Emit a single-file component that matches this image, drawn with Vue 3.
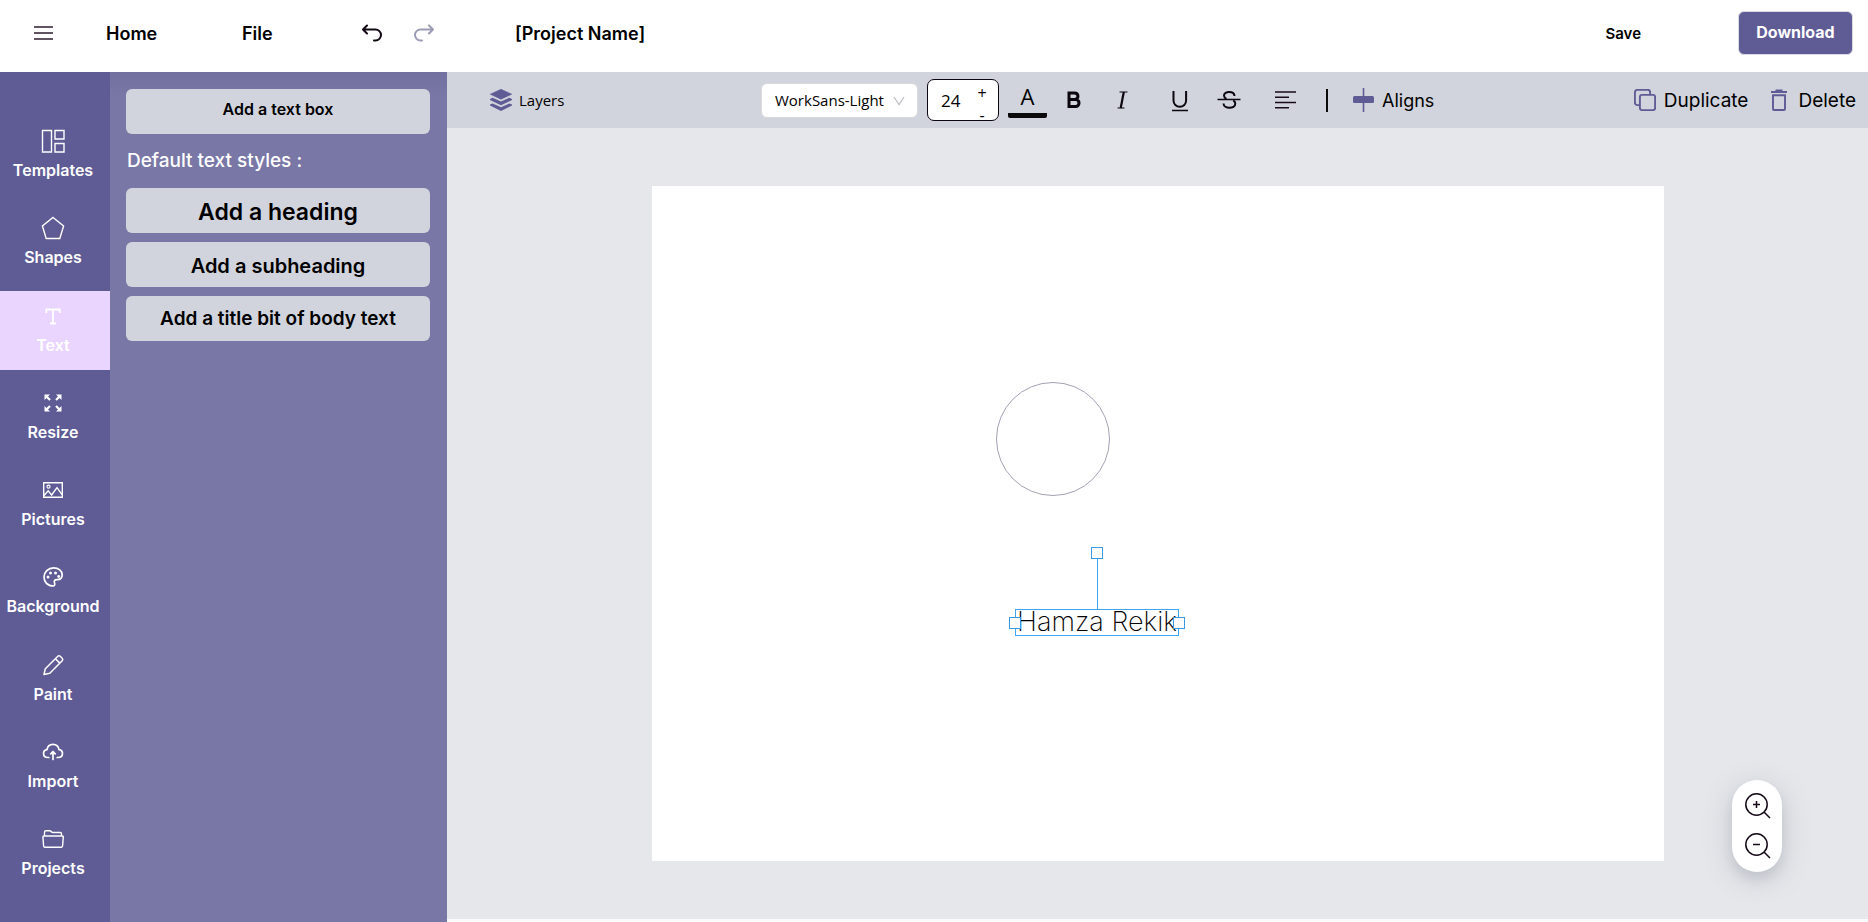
<script setup>
import { ref } from 'vue'

const tools = ['Templates', 'Shapes', 'Text', 'Resize', 'Pictures', 'Background', 'Paint', 'Import', 'Projects']
const active = ref('Text')
const fontFamily = ref('WorkSans-Light')
const fontSize = ref(24)
const projectName = ref('[Project Name]')
</script>

<template>
  <div class="editor">
    <header class="topbar">
      <button class="plain menu" aria-label="Menu">
        <svg width="20" height="14" viewBox="0 0 20 14" fill="none" stroke="#2c1c2e" stroke-width="1.600"><path d="M0 1h19M0 7h19M0 13h19" /></svg>
      </button>
      <nav class="nav">
        <a class="home" href="#home">Home</a>
        <a class="file" href="#file">File</a>
      </nav>
      <div class="history">
        <button class="plain" aria-label="Undo">
          <svg width="20" height="18" viewBox="0 0 20 18" fill="none" stroke="#120814" stroke-width="2" stroke-linecap="round" stroke-linejoin="round"><path d="M5 1.500 1 5.500 5 9.500M1 5.500h12.500a5.300 5.300 0 0 1 0 11h-1.500" /></svg>
        </button>
        <button class="plain" aria-label="Redo">
          <svg width="20" height="18" viewBox="0 0 20 18" fill="none" stroke="#9b9bb6" stroke-width="2" stroke-linecap="round" stroke-linejoin="round"><path d="M15 1.500 19 5.500 15 9.500M19 5.500H6.500a5.300 5.300 0 0 0 0 11h1.500" /></svg>
        </button>
      </div>
      <input v-model="projectName" class="project" aria-label="Project name" />
      <div class="actions">
        <button class="plain save">Save</button>
        <button class="download">Download</button>
      </div>
    </header>

    <div class="body">
      <aside class="sidebar">
        <button v-for="t in tools" :key="t" class="tool" :class="{ active: t === active }" @click="active = t">
          <svg class="tool-icon" width="24" height="24" viewBox="0 0 24 24" fill="none" stroke="#fff" stroke-width="1.400">
            <path v-if="t === 'Templates'" d="M1.500 1.500h9v21.500h-9zM14 1.500h9v8.500h-9zM14 14.500h9V23h-9z" />
            <path v-else-if="t === 'Shapes'" d="M12 1.500 22.600 10 18.800 22.500H5.200L1.400 10z" />
            <path v-else-if="t === 'Text'" d="M5.300 9V5.500h13.400V9M12 5.500v14M9 19.500h6" stroke-width="1.800" />
            <g v-else-if="t === 'Resize'" stroke-width="2.200">
              <path d="M5.500 5.500 9 9M18.500 5.500 15 9M5.500 18.500 9 15M18.500 18.500 15 15" />
              <path d="M3.500 3.500h5.500l-5.500 5.500zM20.500 3.500v5.500l-5.500-5.500zM3.500 20.500v-5.500l5.500 5.500zM20.500 20.500h-5.500l5.500-5.500z" fill="#fff" stroke="none" />
            </g>
            <g v-else-if="t === 'Pictures'" stroke-width="1.400">
              <path d="M2.700 4.700h18.600v14.600H2.700zM3 17.500l4.200-4.700 3.400 4.200 5.400-7.300 5 7" /><circle cx="7.500" cy="8.700" r="1.500" stroke-width="1.200" />
            </g>
            <g v-else-if="t === 'Background'">
              <path d="M12.500 21c-6 0-9.500-4.200-9.500-9s4.200-9.200 9.600-9.200c5 0 8.600 3.200 8.600 7 0 3.600-2.700 4.900-5 4.900-3.200 0-3.200 1.700-2.700 3 .5 1.400.3 3.300-1 3.300z" stroke-width="1.700" />
              <g fill="#fff" stroke="none"><circle cx="7" cy="12" r="1.500" /><circle cx="9.500" cy="8" r="1.500" /><circle cx="14.500" cy="8" r="1.500" /><circle cx="17.700" cy="11.500" r="1.400" /></g>
            </g>
            <path v-else-if="t === 'Paint'" stroke-width="1.500" stroke-linejoin="round" d="M3 21.500l1.300-5.800L16.800 3.300a1.700 1.700 0 0 1 2.400 0l2 2a1.700 1.700 0 0 1 0 2.400L8.800 20.200zM14.400 5.700l4.400 4.400" />
            <g v-else-if="t === 'Import'" stroke-width="1.700" stroke-linecap="round" stroke-linejoin="round">
              <path d="M7.800 17.500H7c-6 0-5.500-7.500-1-7.900C7 2.500 17 2.500 18 9.600c4.600.4 5 7.900-1 7.900h-.8" /><path d="M12 19.500v-7M9.800 13.800 12 11.500l2.200 2.300" />
            </g>
            <g v-else stroke-width="1.400" stroke-linejoin="round">
              <path d="M3.500 9V5.200c0-.8.500-1.400 1.300-1.400h4c1.200 0 1.700 1.700 3 1.700h7.400c.8 0 1.300.6 1.300 1.300V9" /><path d="M2.800 9h18.600c.6 0 1 .4.900 1l-.7 8.800c0 .8-.6 1.400-1.300 1.400H3.900c-.7 0-1.200-.6-1.300-1.400L1.900 10c0-.6.300-1 .9-1z" />
            </g>
          </svg>
          <span>{{ t }}</span>
        </button>
      </aside>

      <section class="panel">
        <button class="style-btn box">Add a text box</button>
        <h2>Default text styles :</h2>
        <div class="styles">
          <button class="style-btn heading">Add a heading</button>
          <button class="style-btn subheading">Add a subheading</button>
          <button class="style-btn bodytext">Add a title bit of body text</button>
        </div>
      </section>

      <main class="stage">
        <div class="toolbar">
          <button class="plain layers">
            <svg width="22" height="22" viewBox="0 0 22 22" fill="#5e5b95"><path d="M11 .3 21.700 5.200 11 10.200.3 5.200z" stroke="#5e5b95" stroke-linejoin="round" stroke-width=".6" /><path d="M2.600 8.700 11 12.600l8.400-3.900L22 10 v1L11 16.300 0 11v-1zM2.600 14.400 11 18.200l8.400-3.800L22 15.600v1L11 22 0 16.600v-1z" /></svg>
            Layers
          </button>
          <div class="format">
            <div class="select">
              <select v-model="fontFamily" aria-label="Font family"><option>WorkSans-Light</option></select>
              <svg width="12" height="10" viewBox="0 0 12 10" fill="none" stroke="#bfbfc4" stroke-width="1.300"><path d="M1 1l5 7.500L11 1" /></svg>
            </div>
            <div class="size">
              <input v-model="fontSize" aria-label="Font size" />
              <div class="steps">
                <button class="plain" aria-label="Increase" @click="fontSize++">+</button>
                <button class="plain minus" aria-label="Decrease" @click="fontSize--">-</button>
              </div>
            </div>
            <button class="plain color" aria-label="Text colour">A</button>
            <button class="plain icon bold" aria-label="Bold">
              <svg width="24" height="24" viewBox="0 0 24 24" fill="none" stroke="#0d060f" stroke-width="3"><path d="M7 5h5.500c4.600 0 4.600 6.500 0 6.500H7zM7 11.500h6.500c4.700 0 4.700 7 0 7H7z" /></svg>
            </button>
            <button class="plain icon italic" aria-label="Italic">
              <svg width="24" height="24" viewBox="0 0 24 24" fill="none" stroke="#0d060f"><path d="M9.500 4h8M7.500 20h7" stroke-width="1.200" /><path d="M13.800 4 10.700 20" stroke-width="2.200" /></svg>
            </button>
            <button class="plain icon underline" aria-label="Underline">
              <svg width="24" height="24" viewBox="0 0 24 24" fill="none" stroke="#0d060f"><path d="M5.500 3v9.500a6.300 6.300 0 0 0 12.600 0V3" stroke-width="2" /><path d="M4 22.500h16" stroke-width="1.500" /></svg>
            </button>
            <button class="plain icon strike" aria-label="Strikethrough">
              <svg width="24" height="24" viewBox="0 0 24 24" fill="none" stroke="#0d060f" stroke-width="2"><path d="M17.500 8C17.300 2.700 7 2.700 7 7.500c0 1.700 1 2.700 2.500 3.500M6.500 15.500c.2 5.700 11.800 5.700 11.800.3 0-1.600-.7-2.700-2-3.500" /><path d="M.5 11.500h23" stroke-width="1.500" /></svg>
            </button>
            <button class="plain icon align" aria-label="Align left">
              <svg width="24" height="24" viewBox="0 0 24 24" fill="none" stroke="#1a0a1c" stroke-width="1.600"><path d="M2 4h21M2 9.300h14M2 14.500h21M2 19.800h14" /></svg>
            </button>
            <span class="divider"></span>
            <button class="plain label-btn aligns">
              <svg width="22" height="24" viewBox="0 0 22 24"><path d="M10.500 0v24" stroke="#5e5b95" stroke-width="1.600" /><rect x="0" y="8" width="21" height="7" rx="1.500" fill="#5e5b95" /></svg>
              Aligns
            </button>
          </div>
          <div class="object-actions">
            <button class="plain label-btn">
              <svg width="22" height="22" viewBox="0 0 22 22" fill="none" stroke="#5e5b95" stroke-width="1.900"><rect x="5.900" y="5.900" width="15.200" height="15.200" rx="2" /><path d="M5.500 16.100H3.400a2.500 2.500 0 0 1-2.500-2.500V3.400A2.500 2.500 0 0 1 3.400.9h10.200a2.500 2.500 0 0 1 2.500 2.500v2.100" /></svg>
              Duplicate
            </button>
            <button class="plain label-btn delete">
              <svg width="18" height="22" viewBox="0 0 18 22" fill="none" stroke="#5e5b95" stroke-width="1.900"><path d="M1 3h16M5.500 1.500h7" /><path d="M3 6.200h12V20a1 1 0 0 1-1 1H4a1 1 0 0 1-1-1z" /></svg>
              Delete
            </button>
          </div>
        </div>

        <div class="workspace">
          <div class="canvas">
            <div class="circle"></div>
            <div class="text-object">
              <span class="text">Hamza Rekik</span>
              <i class="stem"></i>
              <i class="handle rotate"></i>
              <i class="handle left"></i>
              <i class="handle right"></i>
            </div>
          </div>
          <div class="zoom">
            <button class="plain" aria-label="Zoom in">
              <svg width="26" height="26" viewBox="0 0 26 26" fill="none" stroke="#160a18" stroke-width="1.500"><circle cx="11.500" cy="11.500" r="10.700" /><path d="M19 19l6 6" /><path d="M11.500 8v7M8 11.500h7" /></svg>
            </button>
            <button class="plain" aria-label="Zoom out">
              <svg width="26" height="26" viewBox="0 0 26 26" fill="none" stroke="#160a18" stroke-width="1.500"><circle cx="11.500" cy="11.500" r="10.700" /><path d="M19 19l6 6" /><path d="M8 11.500h7" /></svg>
            </button>
          </div>
        </div>
      </main>
    </div>
  </div>
</template>

<style>
body { background: #fafafa; }
</style>

<style scoped>
* { box-sizing: border-box; }
.editor {
  display: flex;
  flex-direction: column;
  min-height: 100vh;
  font-family: Inter, "Open Sans", sans-serif;
  color: #000;
}
svg { display: block; flex: none; }
button, input, select { font: inherit; color: inherit; margin: 0; }
.plain { background: none; border: 0; padding: 0; cursor: pointer; }

.topbar {
  display: flex;
  align-items: center;
  height: 72px;
  padding: 0 15px 6px 34px;
  background: #fff;
  font-size: 18px;
  font-weight: 600;
}
.menu { margin-right: 52px; }
.nav { display: flex; width: 256px; }
.nav a { color: inherit; text-decoration: none; }
.home { width: 136px; }
.history { display: flex; gap: 32px; width: 153px; }
.project { flex: 1; min-width: 0; border: 0; padding: 0; background: none; outline: 0; }
.actions { display: flex; align-items: center; gap: 97px; font-size: 16px; }
.save { font-size: 15px; }
.download {
  height: 44px;
  width: 115px;
  border: 1px solid #d9dbe3;
  border-radius: 6px;
  background: #5e5b95;
  color: #fff;
  padding: 0 0 2px;
  font-weight: 700;
}

.body { flex: 1; display: flex; }
.sidebar {
  width: 110px;
  flex: none;
  display: flex;
  flex-direction: column;
  justify-content: space-between;
  padding: 44px 0 29px;
  background: #5e5b95;
}
.tool {
  display: flex;
  flex-direction: column;
  align-items: center;
  gap: 5px;
  height: 79px;
  padding: 13px 4px 0 0;
  border: 0;
  background: none;
  color: #fff;
  font-size: 16px;
  font-weight: 600;
  line-height: 24px;
}
.tool.active { background: #e9d5ff; }

.panel {
  width: 337px;
  flex: none;
  padding: 17px 17px 0 16px;
  background: linear-gradient(#71709e, #7877a5 24px);
}
.panel h2 {
  margin: 15px 0 15px 1px;
  color: #fff;
  font-size: 19px;
  font-weight: 500;
  line-height: 24px;
}
.styles { display: flex; flex-direction: column; gap: 9px; }
.style-btn {
  display: block;
  width: 100%;
  height: 45px;
  border: 0;
  border-radius: 6px;
  background: #d1d4dc;
  font-weight: 600;
  padding: 2px 0 0;
}
.box { font-size: 16px; padding: 0 0 6px; }
.heading { font-size: 23px; }
.subheading { font-size: 20px; }
.bodytext { font-size: 19px; padding: 0; }

.stage { flex: 1; min-width: 0; display: flex; flex-direction: column; }
.toolbar {
  display: flex;
  align-items: center;
  height: 56px;
  padding: 0 12px 0 43px;
  background: #d1d4dc;
}
.layers {
  display: flex;
  align-items: center;
  gap: 7px;
  width: 271px;
  font: 500 15px "Open Sans", sans-serif;
}
.format { display: flex; align-items: center; flex: 1; }
.select { position: relative; display: flex; width: 157px; }
.select select {
  appearance: none;
  width: 100%;
  height: 35px;
  padding: 0 0 0 13px;
  border: 1px solid #d9d9d9;
  border-radius: 6px;
  background: #fff;
  font: 15px "Open Sans", sans-serif;
}
.select svg { position: absolute; right: 13px; top: 13px; pointer-events: none; }
.size {
  display: flex;
  width: 72px;
  height: 42px;
  margin-left: 9px;
  border: 1px solid #0d060f;
  border-radius: 7px;
  background: #fff;
}
.size input {
  width: 47px;
  border: 0;
  padding: 0 0 0 13px;
  background: none;
  outline: 0;
  font: 17px "Open Sans", sans-serif;
}
.steps { display: flex; flex-direction: column; gap: 4px; font: 16px "Open Sans", sans-serif; }
.steps button { width: 14px; height: 26px; line-height: 26px; }
.steps .minus { height: 10px; line-height: 10px; }
.color {
  width: 39px;
  height: 36px;
  margin: 0 15px 0 9px;
  padding-bottom: 4px;
  border-bottom: 5px solid #0a0a0a;
  border-radius: 2px;
  font: 22px/28px "Open Sans", sans-serif;
}
.bold { margin-right: 24px; }
.italic { margin-right: 34px; }
.underline { margin-right: 25px; }
.strike { margin-right: 32px; }
.align { margin-right: 29px; }
.divider { width: 2px; height: 23px; margin-right: 25px; background: #0a0a0a; }
.label-btn { display: flex; align-items: center; gap: 8px; font-size: 19px; }
.aligns { gap: 7px; font-size: 18px; }
.object-actions { display: flex; gap: 22px; }
.delete { gap: 10px; }

.workspace {
  position: relative;
  flex: 1;
  display: flex;
  padding: 58px 204px 58px 205px;
  margin-bottom: 3px;
  background: #e5e7eb;
}
.canvas { position: relative; flex: 1; background: #fff; }
.circle {
  position: absolute;
  left: 344px;
  top: 196px;
  width: 114px;
  height: 114px;
  border: 1px solid #a3a2b4;
  border-radius: 50%;
}
.text-object {
  position: absolute;
  left: 363px;
  top: 423px;
  width: 164px;
  height: 27px;
  border: 1px solid #3fa5f0;
}
.text {
  display: block;
  padding-left: 1px;
  font-size: 27px;
  font-weight: 200;
  line-height: 24px;
  white-space: nowrap;
}
.stem { position: absolute; left: 81px; top: -52px; width: 1px; height: 51px; background: #3fa5f0; }
.handle { position: absolute; width: 12px; height: 12px; border: 1px solid #3a9ae4; background: #fff; }
.rotate { left: 75px; top: -63px; }
.left { left: -7px; top: 7px; }
.right { right: -7px; top: 7px; }

.zoom {
  position: absolute;
  right: 86px;
  bottom: 47px;
  display: flex;
  flex-direction: column;
  gap: 14px;
  width: 50px;
  padding: 13px 11px 13px 13px;
  border-radius: 25px;
  background: #fff;
  box-shadow: 0 6px 30px rgba(90, 100, 115, 0.22), 0 8px 12px rgba(90, 100, 115, 0.14);
}
</style>
